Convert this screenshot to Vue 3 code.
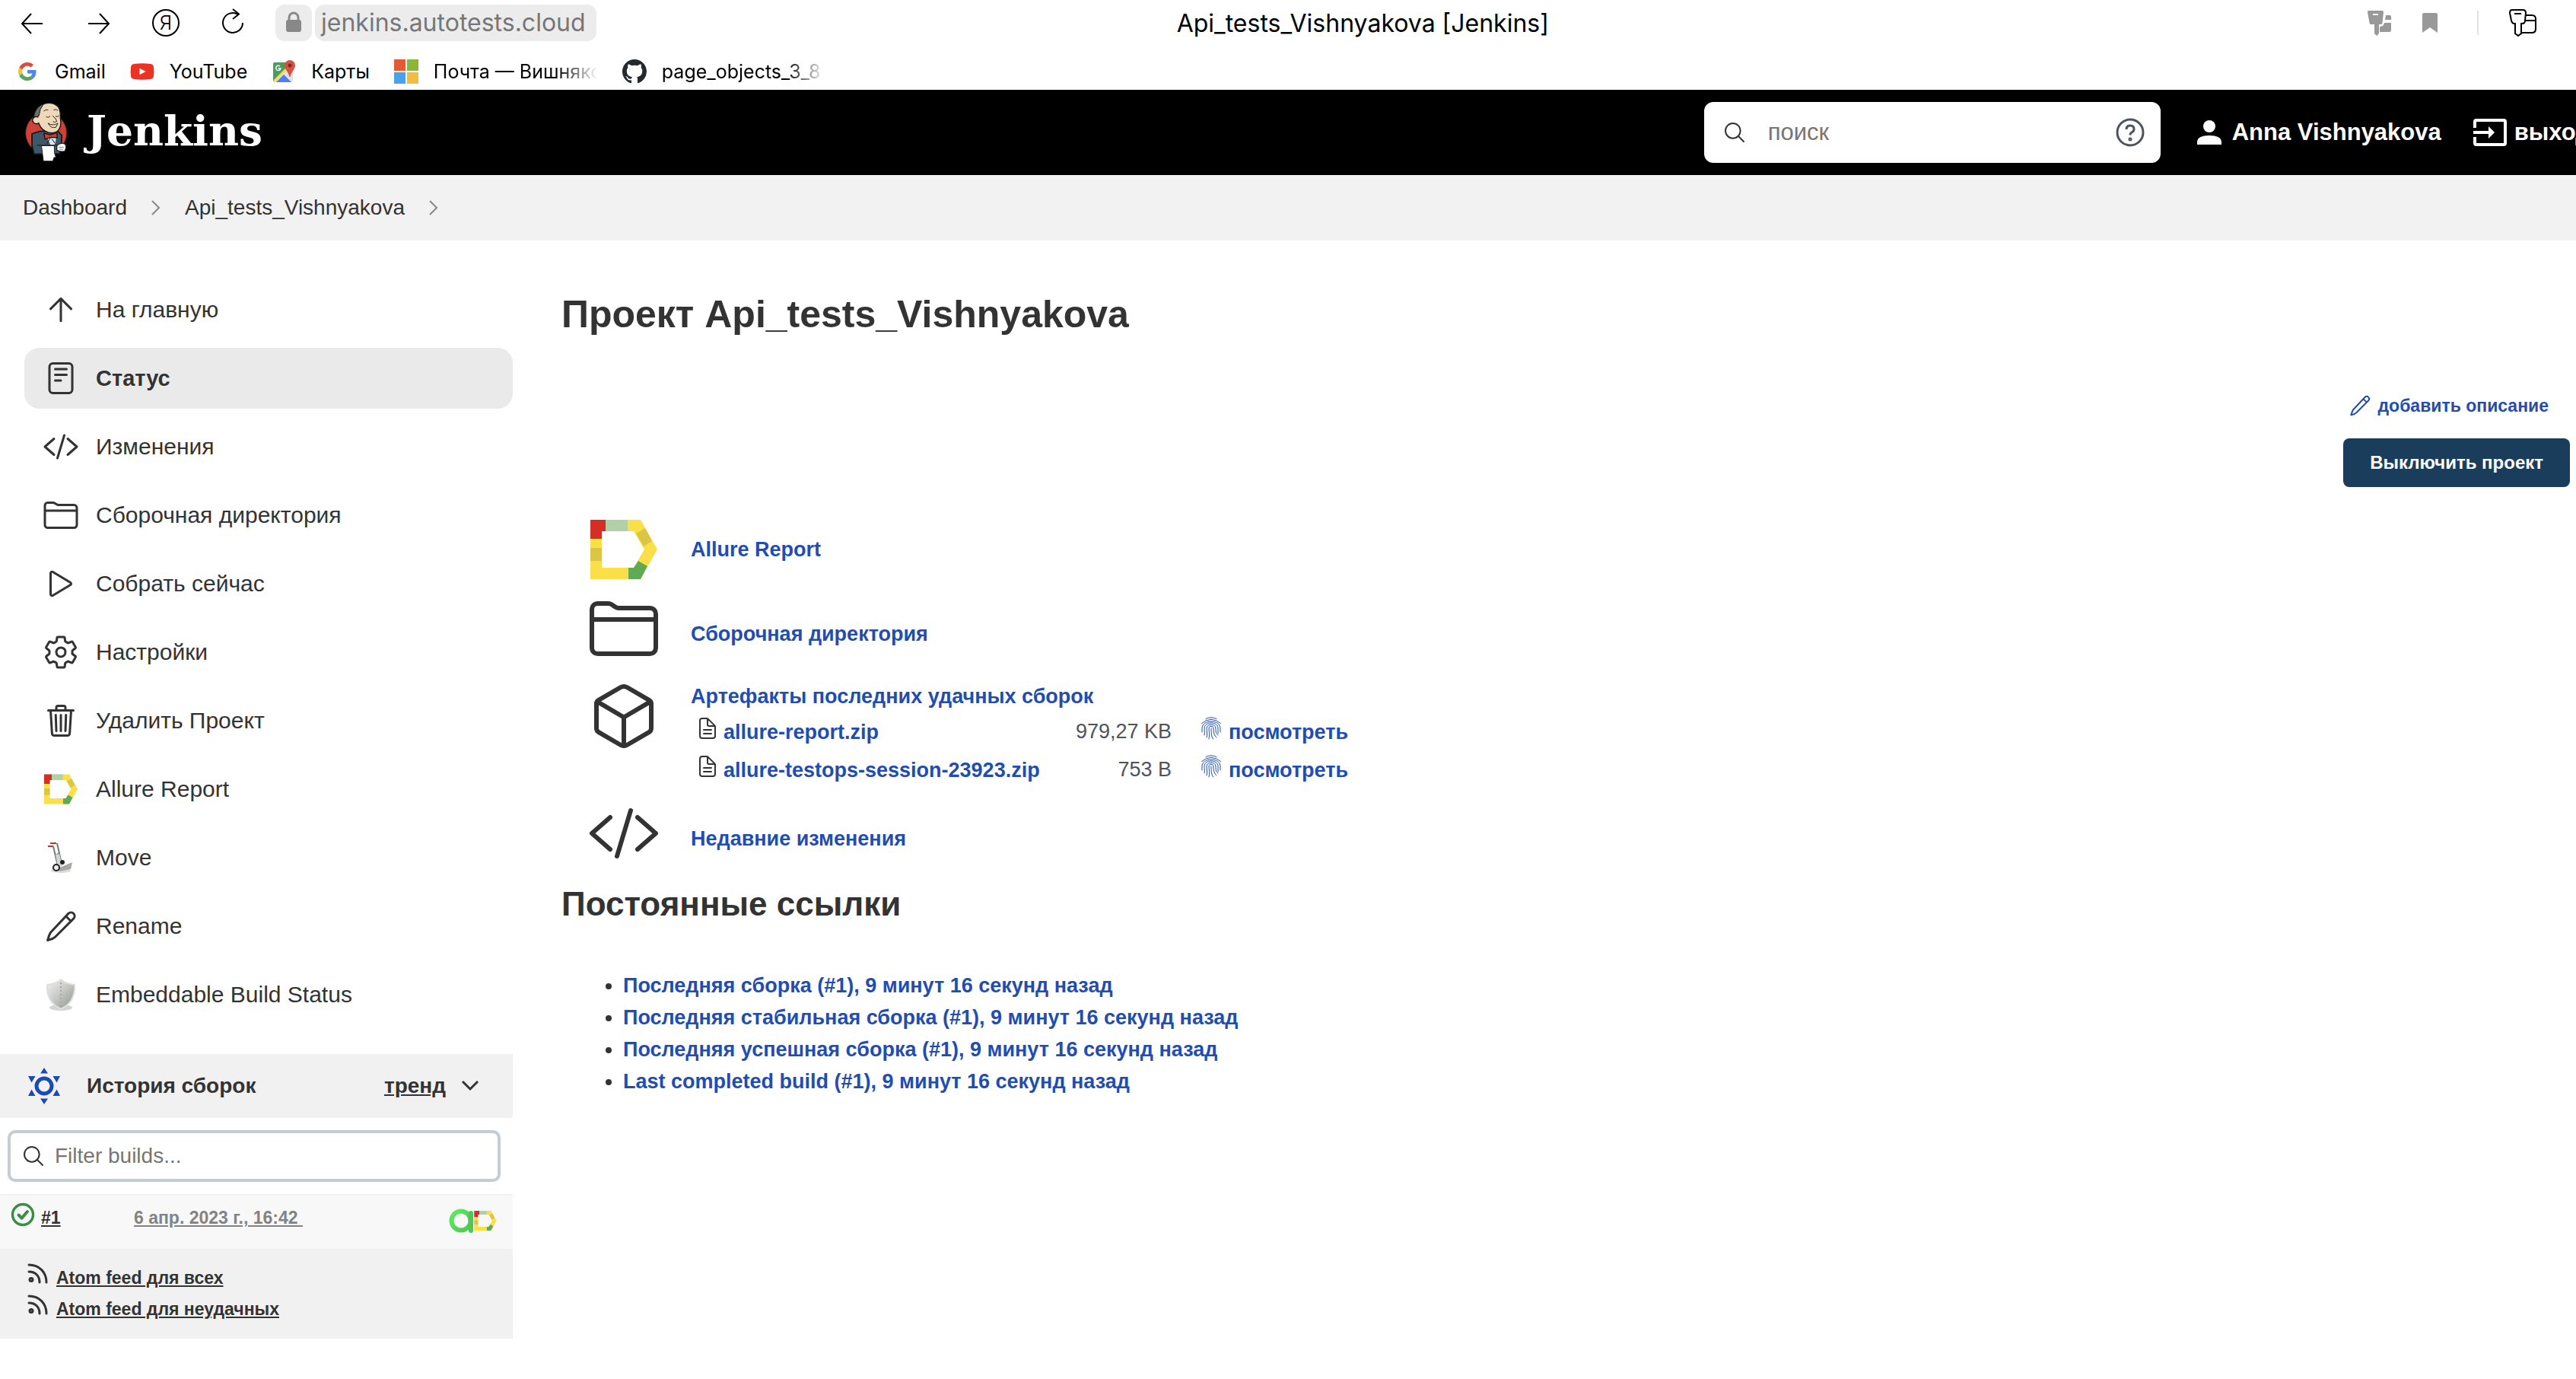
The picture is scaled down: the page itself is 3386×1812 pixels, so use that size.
<script setup>
import { ref } from 'vue'

const search = ref('')
const filter = ref('')

const tasks = [
  { icon: 'up', label: 'На главную' },
  { icon: 'reader', label: 'Статус', active: true },
  { icon: 'code', label: 'Изменения' },
  { icon: 'folder', label: 'Сборочная директория' },
  { icon: 'play', label: 'Собрать сейчас' },
  { icon: 'gear', label: 'Настройки' },
  { icon: 'trash', label: 'Удалить Проект' },
  { icon: 'allure', label: 'Allure Report' },
  { icon: 'truck', label: 'Move' },
  { icon: 'pencil', label: 'Rename' },
  { icon: 'shield', label: 'Embeddable Build Status' },
]

const bookmarks = [
  { icon: 'google', label: 'Gmail' },
  { icon: 'youtube', label: 'YouTube' },
  { icon: 'maps', label: 'Карты' },
  { icon: 'windows', label: 'Почта — Вишнякова', faded: true },
  { icon: 'github', label: 'page_objects_3_8', faded: true },
]

const artifacts = [
  { name: 'allure-report.zip', size: '979,27 KB' },
  { name: 'allure-testops-session-23923.zip', size: '753 B' },
]

const permalinks = [
  'Последняя сборка (#1), 9 минут 16 секунд назад',
  'Последняя стабильная сборка (#1), 9 минут 16 секунд назад',
  'Последняя успешная сборка (#1), 9 минут 16 секунд назад',
  'Last completed build (#1), 9 минут 16 секунд назад',
]

const feeds = ['Atom feed для всех', 'Atom feed для неудачных']
</script>

<template>
  <svg class="sprite" aria-hidden="true">
    <defs>
      <linearGradient id="steel" x1="0" y1="0" x2="1" y2="1">
        <stop offset="0" stop-color="#f4f5f3" />
        <stop offset="0.5" stop-color="#c4c6c2" />
        <stop offset="1" stop-color="#8f918d" />
      </linearGradient>
      <linearGradient id="lime" x1="0" y1="0" x2="1" y2="1">
        <stop offset="0" stop-color="#5eea62" />
        <stop offset="1" stop-color="#4fc84f" />
      </linearGradient>
    </defs>
    <symbol id="i-up" viewBox="0 0 512 512"><path class="ln" d="M112 244l144-144 144 144M256 120v292" /></symbol>
    <symbol id="i-reader" viewBox="0 0 512 512">
      <rect class="ln" x="96" y="48" width="320" height="416" rx="48" />
      <path class="ln" d="M176 128h160M176 208h160M176 288h80" />
    </symbol>
    <symbol id="i-code" viewBox="0 0 512 512"><path class="ln" d="M160 368L32 256l128-112M352 368l128-112-128-112M304 96l-96 320" /></symbol>
    <symbol id="i-folder" viewBox="0 0 512 512">
      <path class="ln" d="M440 432H72a40 40 0 01-40-40V120a40 40 0 0140-40h75.89a40 40 0 0122.19 6.72l27.84 18.56a40 40 0 0022.19 6.72H440a40 40 0 0140 40v240a40 40 0 01-40 40zM32 192h448" />
    </symbol>
    <symbol id="i-play" viewBox="0 0 512 512">
      <path class="ln" d="M112 111v290c0 17.44 17 28.52 31 20.16l247.9-148.37c12.12-7.25 12.12-26.33 0-33.58L143 90.84c-14-8.36-31 2.72-31 20.16z" />
    </symbol>
    <symbol id="i-gear" viewBox="0 0 512 512">
      <path class="ln" d="M262.29 192.31a64 64 0 1057.4 57.4 64.13 64.13 0 00-57.4-57.4zM416.39 256a154.34 154.34 0 01-1.53 20.79l45.21 35.46a10.81 10.81 0 012.45 13.75l-42.77 74a10.81 10.81 0 01-13.14 4.59l-44.9-18.08a16.11 16.11 0 00-15.17 1.75A164.48 164.48 0 01325 400.8a15.94 15.94 0 00-8.82 12.14l-6.73 47.89a11.08 11.08 0 01-10.68 9.17h-85.54a11.11 11.11 0 01-10.69-8.87l-6.72-47.82a16.07 16.07 0 00-9-12.22 155.3 155.3 0 01-21.46-12.57 16 16 0 00-15.11-1.71l-44.89 18.07a10.81 10.81 0 01-13.14-4.58l-42.77-74a10.8 10.8 0 012.45-13.75l38.21-30a16.05 16.05 0 006-14.08c-.36-4.17-.58-8.33-.58-12.5s.21-8.27.58-12.35a16 16 0 00-6.07-13.94l-38.19-30A10.81 10.81 0 0149.48 186l42.77-74a10.81 10.81 0 0113.14-4.59l44.9 18.08a16.11 16.11 0 0015.17-1.75A164.48 164.48 0 01187 111.2a15.94 15.94 0 008.82-12.14l6.73-47.89A11.08 11.08 0 01213.23 42h85.54a11.11 11.11 0 0110.69 8.87l6.72 47.82a16.07 16.07 0 009 12.22 155.3 155.3 0 0121.46 12.57 16 16 0 0015.11 1.71l44.89-18.07a10.81 10.81 0 0113.14 4.58l42.77 74a10.8 10.8 0 01-2.45 13.75l-38.21 30a16.05 16.05 0 00-6.05 14.08c.33 4.14.55 8.3.55 12.47z" />
    </symbol>
    <symbol id="i-trash" viewBox="0 0 512 512">
      <path class="ln" d="M112 112l20 320c.95 18.49 14.4 32 32 32h184c17.67 0 30.87-13.51 32-32l20-320M80 112h352M192 112V72a24 24 0 0124-24h80a24 24 0 0124 24v40M256 176v224M184 176l8 224M328 176l-8 224" />
    </symbol>
    <symbol id="i-cube" viewBox="0 0 512 512">
      <path class="ln" d="M448 341.37V170.61A32 32 0 00432.11 143l-152-88.46a47.94 47.94 0 00-48.24 0L79.89 143A32 32 0 0064 170.61v170.76A32 32 0 0079.89 369l152 88.46a48 48 0 0048.24 0l152-88.46A32 32 0 00448 341.37z" />
      <path class="ln" d="M69 153.99l187 110 187-110M256 463.99v-200" />
    </symbol>
    <symbol id="i-pencil" viewBox="0 0 512 512">
      <path class="ln" d="M364 76a51 51 0 0172 72L176 408l-38 24-68 22 22-68 20-42zM326 114l72 72" />
    </symbol>
    <symbol id="i-search" viewBox="0 0 512 512">
      <path class="ln" d="M221.09 64a157.09 157.09 0 10157.09 157.09A157.1 157.1 0 00221.09 64zM338.29 338.29L448 448" />
    </symbol>
    <symbol id="i-doc" viewBox="0 0 512 512">
      <path class="ln" d="M416 221.25V416a48 48 0 01-48 48H144a48 48 0 01-48-48V96a48 48 0 0148-48h98.75a32 32 0 0122.62 9.37l141.26 141.26a32 32 0 019.37 22.62zM256 56v120a32 32 0 0032 32h120M176 288h160M176 368h160" />
    </symbol>
    <symbol id="i-finger" viewBox="0 0 32 32">
      <path class="hair" d="M9 3.500Q16 0 23 3.500M3.500 9.500Q16-1 28.500 9.500M4 21v-5C4 4 28 4 28 16v5M7 25c1-3 0-5 0-9 0-9.500 18-9.500 18 0v7M10 28c1.500-4 0-8 0-12 0-6.500 12-6.500 12 0 0 4 0 7 3 9M13 30c1.500-5 0-10 0-14 0-3.500 6-3.500 6 0 0 5 1 10 4 12M16 16c0 6 0 10 2.500 14" />
    </symbol>
    <symbol id="i-rss" viewBox="0 0 28 28">
      <path class="rss" d="M2 3c14 0 23 10 23 23M2 12c9 0 14 6 14 14" />
      <circle class="rss" cx="5" cy="22.500" r="2" />
    </symbol>
    <symbol id="i-ok" viewBox="0 0 32 32">
      <circle cx="16" cy="16" r="13.500" fill="none" stroke="#3a8d45" stroke-width="3.400" />
      <path d="M10.500 16.500l4 4.200 7.500-8.700" fill="none" stroke="#3a8d45" stroke-width="4" stroke-linecap="round" stroke-linejoin="round" />
    </symbol>
    <symbol id="i-history" viewBox="0 0 48 48">
      <circle cx="24" cy="24" r="10" fill="none" stroke="#1b4ab8" stroke-width="5" />
      <path fill="#1b4ab8" d="M24 0l5 7.500H19zM24 48l5-7.500H19zM3 11h9.500L7.500 19.500zM45 11h-9.500l5 8.500zM3 37h9.500L7.500 28.500zM45 37h-9.500l5-8.500z" />
    </symbol>
    <symbol id="i-allure" viewBox="-4 -9 96 96">
      <path fill="#fadf48" fill-rule="evenodd" d="M0 0H66L88 39 66 78H0zM15 15V63H57L71 39 57 15z" />
      <path fill="#d52e24" d="M0 0H20V15H15V25H0z" />
      <path fill="#b0d0a8" d="M20 0H49V15H20z" />
      <path fill="#dcc544" d="M0 37H15V54H0zM60 18L72 11 81 28 70 35z" />
      <path fill="#5fab55" d="M50 63H57L63 54 75 61 66 78H50z" />
    </symbol>
    <symbol id="i-a" viewBox="0 0 32 32">
      <circle cx="16" cy="16" r="12.500" fill="none" stroke="url(#lime)" stroke-width="6" />
      <path d="M29 6v23" stroke="#4fc84f" stroke-width="6" stroke-linecap="round" />
    </symbol>
    <symbol id="i-truck" viewBox="0 0 48 48">
      <ellipse cx="24" cy="41" rx="13" ry="3" fill="#dcdcdc" />
      <path d="M14 9l6 26M19 5l6 27M17 21l5-3" fill="none" stroke="#777a78" stroke-width="2" />
      <path d="M7 9h7M10 5h8" stroke="#c8322c" stroke-width="2" />
      <path d="M17 20l5-1 4 16-6 1z" fill="#d5d7d4" />
      <path d="M20 38l19-8-2 9-15 3z" fill="#a5a8a4" />
      <circle cx="26" cy="30" r="3" fill="#222" />
      <circle cx="18" cy="37" r="4" fill="#eee" stroke="#222" stroke-width="2" />
    </symbol>
    <symbol id="i-shield" viewBox="0 0 48 48">
      <ellipse cx="24" cy="41" rx="15" ry="4" fill="#d4d4d4" />
      <path d="M24 4c4 4 10 6 18 7 1 14-4 25-18 32C10 36 5 25 6 11c8-1 14-3 18-7z" fill="url(#steel)" stroke="#dfe0de" stroke-width="2" />
      <path d="M24 8v32" stroke="#a6a8a4" stroke-width="2" stroke-dasharray="2 3" />
    </symbol>
    <symbol id="i-google" viewBox="-8 -8 64 64">
      <path fill="#d94f3d" d="M24 9.5c3.54 0 6.71 1.22 9.21 3.6l6.85-6.85C35.9 2.38 30.47 0 24 0 14.62 0 6.51 5.38 2.56 13.22l7.98 6.19C12.43 13.72 17.74 9.5 24 9.5z" />
      <path fill="#5086ec" d="M46.98 24.55c0-1.57-.15-3.09-.38-4.55H24v9.02h12.94c-.58 2.96-2.26 5.48-4.78 7.18l7.73 6c4.51-4.18 7.09-10.36 7.09-17.65z" />
      <path fill="#f2be42" d="M10.53 28.59c-.48-1.45-.76-2.99-.76-4.59s.27-3.14.76-4.59l-7.98-6.19C.92 16.46 0 20.12 0 24c0 3.88.92 7.54 2.56 10.78l7.97-6.19z" />
      <path fill="#58a55c" d="M24 48c6.480 0 11.930-2.130 15.890-5.810l-7.730-6c-2.150 1.450-4.920 2.300-8.160 2.300-6.260 0-11.570-4.220-13.470-9.910l-7.980 6.190C6.510 42.620 14.620 48 24 48z" />
    </symbol>
    <symbol id="i-youtube" viewBox="0 0 32 32">
      <path fill="#ea3323" d="M5 6q11-1.500 22 0 3.500.5 4 4 .8 6 0 12-.5 3.500-4 4-11 1.500-22 0-3.500-.5-4-4-.8-6 0-12Q1.500 6.500 5 6z" />
      <path fill="#fff" d="M12.500 11.800l8 4.200-8 4.200z" />
    </symbol>
    <symbol id="i-maps" viewBox="0 0 32 32">
      <rect x="2" y="4" width="26" height="26" rx="2" fill="#dfe1e4" />
      <path fill="#4b9a5f" d="M2 6a2 2 0 012-2h17v8L3 29H2z" />
      <path fill="#4f7ff0" d="M6 30l10-10 10 10z" />
      <path d="M3 29L20 12" stroke="#f7dc4e" stroke-width="3" />
      <path d="M11 9a3.200 3.200 0 101 3H8.500" fill="none" stroke="#fff" stroke-width="1.400" />
      <path fill="#d8503f" d="M24 1a7 7 0 017 7c0 5-5 8-6.500 15h-1C22 16 17 13 17 8a7 7 0 017-7z" />
      <circle cx="24" cy="8" r="2.500" fill="#7d2a20" />
    </symbol>
    <symbol id="i-windows" viewBox="0 0 32 32">
      <path fill="#e15b34" d="M0 0h15v15H0z" /><path fill="#8cb638" d="M17 0h15v15H17z" />
      <path fill="#4ba0ea" d="M0 17h15v15H0z" /><path fill="#f3bb42" d="M17 17h15v15H17z" />
    </symbol>
    <symbol id="i-github" viewBox="0 0 16 16">
      <path fill="#24292e" d="M8 0C3.58 0 0 3.58 0 8c0 3.54 2.29 6.53 5.47 7.59.4.07.55-.17.55-.38 0-.19-.01-.82-.01-1.49-2.01.37-2.53-.49-2.69-.94-.09-.23-.48-.94-.82-1.13-.28-.15-.68-.52-.01-.53.63-.01 1.08.58 1.23.82.72 1.21 1.87.87 2.33.66.07-.52.28-.87.51-1.07-1.78-.2-3.64-.89-3.64-3.95 0-.87.31-1.59.82-2.15-.08-.2-.36-1.02.08-2.12 0 0 .67-.21 2.2.82.64-.18 1.32-.27 2-.27s1.36.09 2 .27c1.53-1.04 2.2-.82 2.2-.82.44 1.1.16 1.92.08 2.12.51.56.82 1.27.82 2.15 0 3.07-1.87 3.75-3.65 3.95.29.25.54.73.54 1.48 0 1.07-.01 1.93-.01 2.2 0 .21.15.46.55.38A8.01 8.01 0 0016 8c0-4.42-3.58-8-8-8z" />
    </symbol>
  </svg>

  <div class="page">
    <div class="browser">
      <div class="toolbar">
        <button class="tool" aria-label="Назад">
          <svg viewBox="0 0 40 40"><path class="thin" d="M34 21H7M19 8L7 21l12 13" /></svg>
        </button>
        <button class="tool" aria-label="Вперёд">
          <svg viewBox="0 0 40 40"><path class="thin" d="M6 21h27M21 8l12 13-12 13" /></svg>
        </button>
        <button class="tool"><span class="ya">Я</span></button>
        <button class="tool" aria-label="Обновить">
          <svg viewBox="0 0 40 40"><path class="thin" d="M33 20A13 13 0 1 1 27 9M20 2l8 6.500-8 6.500" /></svg>
        </button>
        <span class="lock">
          <svg viewBox="0 0 48 48" width="48" height="48">
            <rect x="14" y="20" width="20" height="16" rx="3" fill="#888" />
            <path d="M18 21v-4a6 6 0 0112 0v4" fill="none" stroke="#888" stroke-width="3" />
          </svg>
        </span>
        <span class="url">jenkins.autotests.cloud</span>
        <span class="tab-title">Api_tests_Vishnyakova [Jenkins]</span>
        <span class="tool-right">
          <svg viewBox="0 0 36 36" width="36" height="36">
            <path fill="#999" fill-rule="evenodd" d="M3 2h18q2 0 2 2l-1.500 14q0 2-2 2H17v12l-3 3-3-3V20H6.500q-2 0-2-2L2 4q0-2 1-2zM9 6v2h7V6z" />
            <path fill="#999" d="M26 8h5q2 0 2 2v4h-8zM24 18h9v10q0 2-2 2H18v-7q5 0 6-5z" />
          </svg>
          <svg viewBox="0 0 20 26" width="20" height="26"><path fill="#999" d="M2 0h16q2 0 2 2v24l-10-7-10 7V2q0-2 2-2z" /></svg>
          <i class="sep"></i>
          <svg viewBox="0 0 36 36" width="36" height="36" class="key">
            <path class="thin" d="M4 1h14q4 0 4 4l-1 10q0 4-4 4h-1v13l-4 3-4-3V19H7q-3 0-4-4L1 5q0-4 3-4zM7 6h9M22 8h8q5 0 5 5v13q0 5-5 5H16M21 15h14" />
          </svg>
        </span>
      </div>
      <nav class="bookmarks">
        <a v-for="b in bookmarks" :key="b.label" href="#" class="bookmark">
          <svg class="i32"><use :href="'#i-' + b.icon" /></svg>
          <span :class="{ faded: b.faded }">{{ b.label }}</span>
        </a>
      </nav>
    </div>

    <header class="top">
      <a href="#" class="brand">
        <svg class="butler" viewBox="96 400 176 245">
          <circle cx="183" cy="525" r="83" fill="#cf4037" stroke="#222" stroke-width="3" />
          <path d="M126 528l32-10 72 0 16 16-2 34-6 40-104 2-8-34z" fill="#3b5769" stroke="#111" stroke-width="5" stroke-linejoin="round" />
          <path d="M188 545l38-10-8 36-14 10z" fill="#d9e6ee" />
          <path d="M146 440q8-26 34-34 30-6 50 12 12 14 10 46l2 18q0 24-14 36-16 10-38 4-22-8-32-26-10-20-14-32z" fill="#efd8ba" stroke="#111" stroke-width="4" />
          <path d="M166 410q-26 14-32 44l2 14 14-12q4 4 6-8 0-18 14-36z" fill="#6d6b6d" stroke="#111" stroke-width="3" />
          <path d="M152 462q-16-8-24 8 0 18 18 18l8-4" fill="#efd8ba" stroke="#111" stroke-width="4" />
          <path d="M174 436q8-8 16-4M214 432q10-6 16 2M184 460q8 6 14-2M222 458q8 4 12-2M210 456q14 12 16 22-6 6-14 2M192 486q16 12 38 0l-8 16q-18 4-26-8z" fill="none" stroke="#222" stroke-width="3" stroke-linecap="round" />
          <path d="M174 526l26 6 26-8 2 20-24-2-26 8z" fill="#d8392f" stroke="#111" stroke-width="4" stroke-linejoin="round" />
          <path d="M200 545l-14 22M206 548l12 18" stroke="#111" stroke-width="3" />
          <path d="M164 576h52v28l6 18-8 2-4 14h-38z" fill="#fff" stroke="#222" stroke-width="3" />
          <path d="M146 574h84M226 574q20-12 34-4 6 14-2 28-18 4-32-4z" fill="#fff" stroke="#222" stroke-width="4" />
          <path d="M234 582h20M236 590h16" stroke="#333" stroke-width="2" />
        </svg>
        <span class="brand-name">Jenkins</span>
      </a>
      <div class="account">
        <label class="search">
          <svg class="i32"><use href="#i-search" /></svg>
          <input v-model="search" type="text" placeholder="поиск" aria-label="поиск" />
          <svg viewBox="0 0 40 40" width="40" height="40" class="help">
            <circle cx="20" cy="20" r="17" />
            <path d="M15 16q0-5 5-5t5 4.500q0 3-3 4.500-2 1-2 3.500" />
            <circle cx="20" cy="29" r="1" />
          </svg>
        </label>
        <a href="#" class="user">
          <svg viewBox="0 0 32 32" width="32" height="32"><circle cx="16" cy="8" r="8" fill="#fff" /><path fill="#fff" d="M0 32v-4q1-8 16-8t16 8v4z" /></svg>
          Anna Vishnyakova
        </a>
        <a href="#" class="logout">
          <svg viewBox="0 0 44 36" width="44" height="36">
            <path d="M2 12V4q0-2 2-2h36q2 0 2 2v28q0 2-2 2H4q-2 0-2-2v-8" fill="none" stroke="#fff" stroke-width="4" />
            <path d="M0 16h20v-6l8 8-8 8v-6H0z" fill="#fff" />
          </svg>
          выход
        </a>
      </div>
    </header>

    <nav class="crumbs">
      <a href="#">Dashboard</a>
      <svg viewBox="0 0 12 20" width="12" height="20"><path d="M1 1l9 9-9 9" /></svg>
      <a href="#">Api_tests_Vishnyakova</a>
      <svg viewBox="0 0 12 20" width="12" height="20"><path d="M1 1l9 9-9 9" /></svg>
    </nav>

    <div class="body">
      <aside>
        <nav class="tasks">
          <a v-for="t in tasks" :key="t.label" href="#" class="task" :class="{ active: t.active }">
            <svg class="i48"><use :href="'#i-' + t.icon" /></svg>
            <span>{{ t.label }}</span>
          </a>
        </nav>

        <section class="history">
          <div class="history-head">
            <svg class="i48"><use href="#i-history" /></svg>
            <b>История сборок</b>
            <a href="#">тренд</a>
            <svg viewBox="0 0 24 16" width="24" height="16" class="chev"><path d="M2 2l10 10L22 2" /></svg>
          </div>
          <label class="filter">
            <svg class="i32"><use href="#i-search" /></svg>
            <input v-model="filter" type="text" placeholder="Filter builds..." aria-label="Filter builds" />
          </label>
          <div class="build">
            <svg class="i32"><use href="#i-ok" /></svg>
            <a href="#" class="num">#1</a>
            <a href="#" class="date">6 апр. 2023 г., 16:42&nbsp;</a>
            <span class="badges">
              <svg class="i32"><use href="#i-a" /></svg>
              <svg class="i32"><use href="#i-allure" /></svg>
            </span>
          </div>
          <div class="feeds">
            <a v-for="f in feeds" :key="f" href="#">
              <svg width="28" height="28"><use href="#i-rss" /></svg>
              <span>{{ f }}</span>
            </a>
          </div>
        </section>
      </aside>

      <main>
        <h1>Проект Api_tests_Vishnyakova</h1>
        <div class="actions">
          <a href="#" class="describe">
            <svg class="i32"><use href="#i-pencil" /></svg>
            добавить описание
          </a>
          <button class="disable">Выключить проект</button>
        </div>

        <div class="summary">
          <div class="row">
            <svg class="i96"><use href="#i-allure" /></svg>
            <a href="#">Allure Report</a>
          </div>
          <div class="row low">
            <svg class="i96"><use href="#i-folder" /></svg>
            <a href="#">Сборочная директория</a>
          </div>
          <div class="row files">
            <svg class="i96"><use href="#i-cube" /></svg>
            <div>
              <a href="#" class="files-title">Артефакты последних удачных сборок</a>
              <table>
                <tbody>
                  <tr v-for="a in artifacts" :key="a.name">
                    <td class="c-name">
                      <svg class="i32"><use href="#i-doc" /></svg>
                      <a href="#">{{ a.name }}</a>
                    </td>
                    <td class="c-size">{{ a.size }}</td>
                    <td class="c-view">
                      <a href="#"><svg class="i32"><use href="#i-finger" /></svg>посмотреть</a>
                    </td>
                  </tr>
                </tbody>
              </table>
            </div>
          </div>
          <div class="row low">
            <svg class="i96"><use href="#i-code" /></svg>
            <a href="#">Недавние изменения</a>
          </div>
        </div>

        <h2>Постоянные ссылки</h2>
        <ul>
          <li v-for="p in permalinks" :key="p"><a href="#">{{ p }}</a></li>
        </ul>
      </main>
    </div>
  </div>
</template>

<style>
body {
  background: #fff;
}
</style>

<style scoped>
.page {
  font-family: "Liberation Sans", Arial, sans-serif;
  font-size: 27px;
  color: #333;
  overflow: hidden;
}
.sprite {
  position: absolute;
  width: 0;
  height: 0;
}
svg {
  display: block;
  flex: none;
}
a {
  color: inherit;
  text-decoration: none;
}
button {
  border: 0;
  padding: 0;
  background: none;
  font: inherit;
}
.i32 { width: 32px; height: 32px; }
.i48 { width: 48px; height: 48px; }
.i96 { width: 96px; height: 96px; }
.ln {
  fill: none;
  stroke: currentColor;
  stroke-width: 32px;
  stroke-linecap: round;
  stroke-linejoin: round;
}
.hair {
  fill: none;
  stroke: currentColor;
  stroke-width: 1px;
  stroke-linecap: round;
}
.rss {
  fill: none;
  stroke: #333;
  stroke-width: 3px;
  stroke-linecap: round;
}
.thin {
  fill: none;
  stroke: #000;
  stroke-width: 2px;
}

.browser {
  font-family: Inter, sans-serif;
  color: #000;
}
.toolbar {
  display: flex;
  align-items: center;
  height: 60px;
  padding: 0 52px 0 22px;
}
.tool {
  width: 40px;
  height: 40px;
  margin-right: 48px;
}
.tool:nth-child(4) {
  margin-right: 36px;
}
.ya {
  display: block;
  box-sizing: border-box;
  width: 36px;
  height: 36px;
  margin: 0 auto;
  border: 2px solid #000;
  border-radius: 50%;
  font-size: 26px;
  font-weight: 300;
  line-height: 32px;
  text-align: center;
}
.lock,
.url {
  height: 48px;
  border-radius: 12px;
  background: #ececec;
}
.lock {
  width: 48px;
  margin-right: 4px;
}
.url {
  padding: 0 14px 0 8px;
  color: #777;
  font-size: 32px;
  line-height: 48px;
}
.tab-title {
  flex: 1;
  font-size: 32px;
  text-align: center;
}
.tool-right {
  display: flex;
  align-items: center;
  justify-content: flex-end;
  width: 535px;
}
.tool-right svg + svg {
  margin-left: 38px;
}
.sep {
  width: 2px;
  height: 32px;
  margin: 0 40px 0 52px;
  background: #e2e2e2;
}
.bookmarks {
  display: flex;
  gap: 32px;
  height: 58px;
  padding: 0 20px;
  box-sizing: border-box;
}
.bookmark {
  display: flex;
  align-items: center;
  gap: 20px;
  height: 68px;
  font-size: 25px;
  white-space: nowrap;
}
.faded {
  width: 216px;
  overflow: hidden;
  mask-image: linear-gradient(to right, #000 75%, transparent 100%);
}

.top {
  display: flex;
  align-items: center;
  height: 112px;
  padding-left: 32px;
  background: #000;
  color: #fff;
  overflow: hidden;
}
.brand {
  display: flex;
  align-items: center;
  gap: 24px;
}
.butler {
  width: 58px;
  height: 80px;
}
.brand-name {
  padding-bottom: 4px;
  font-family: "DejaVu Serif", serif;
  font-size: 55px;
  font-weight: bold;
  line-height: 64px;
}
.account {
  display: flex;
  flex: none;
  align-items: center;
  margin: 0 -19px 0 auto;
  font-size: 31px;
  font-weight: bold;
  white-space: nowrap;
}
.search {
  display: flex;
  align-items: center;
  box-sizing: border-box;
  width: 600px;
  height: 80px;
  margin-right: 48px;
  padding: 0 20px 0 24px;
  border-radius: 12px;
  background: #fff;
  color: #333;
}
input {
  flex: 1;
  min-width: 0;
  padding: 0;
  border: 0;
  outline: 0;
  background: none;
  font: inherit;
}
input::placeholder {
  color: #767676;
  opacity: 1;
}
.search input {
  margin-left: 28px;
  font-size: 31px;
  font-weight: normal;
}
.help {
  fill: none;
  stroke: #4d545d;
  stroke-width: 3px;
}
.user,
.logout {
  display: flex;
  align-items: center;
}
.user {
  gap: 14px;
  margin-right: 42px;
}
.logout {
  gap: 10px;
}

.crumbs {
  display: flex;
  align-items: center;
  gap: 32px;
  height: 86px;
  padding-left: 30px;
  background: #f2f2f2;
  font-size: 28px;
}
.crumbs path {
  fill: none;
  stroke: #888;
  stroke-width: 2px;
}

.body {
  display: flex;
  align-items: flex-start;
}
aside {
  flex: none;
  width: 674px;
  padding-top: 51px;
}
.tasks {
  display: flex;
  flex-direction: column;
  gap: 10px;
  padding-left: 32px;
}
.task {
  display: flex;
  align-items: center;
  gap: 22px;
  height: 80px;
  padding-left: 24px;
  border-radius: 20px;
  font-size: 30px;
}
.task.active {
  background: #eaeaea;
  font-size: 29px;
  font-weight: bold;
}
.history {
  margin-top: 38px;
}
.history-head {
  display: flex;
  align-items: center;
  height: 84px;
  padding: 0 44px 0 34px;
  background: #f1f1f1;
  font-size: 28px;
  font-weight: bold;
}
.history-head b {
  flex: 1;
  margin-left: 32px;
}
.history-head a {
  margin-right: 20px;
  text-decoration: underline;
}
.chev {
  fill: none;
  stroke: #333;
  stroke-width: 3px;
}
.filter {
  display: flex;
  align-items: center;
  gap: 12px;
  box-sizing: border-box;
  height: 68px;
  margin: 16px 16px 16px 10px;
  padding: 0 14px;
  border: 4px solid #c4cdd2;
  border-radius: 10px;
  font-size: 28px;
}
.build {
  display: flex;
  align-items: flex-start;
  box-sizing: border-box;
  height: 72px;
  padding: 9px 20px 0 14px;
  border-top: 2px solid #f0f0f0;
  background: #f8f8f8;
  font-size: 23px;
  font-weight: bold;
  line-height: 40px;
}
.build a {
  text-decoration: underline;
}
.num {
  width: 122px;
  padding-left: 8px;
}
.date {
  flex: 1;
  color: #838383;
}
.badges {
  display: flex;
  margin-top: 8px;
}
.feeds {
  box-sizing: border-box;
  padding: 18px 36px 18px;
  background: #f1f1f1;
  font-size: 23px;
  font-weight: bold;
}
.feeds a {
  display: flex;
  gap: 10px;
  line-height: 41px;
  text-decoration: underline;
}

main {
  flex: 1;
  min-width: 0;
  padding: 67px 0 40px 64px;
}
main a {
  color: #1f4db2;
  font-weight: bold;
}
h1,
h2 {
  margin: 0;
  font-size: 50px;
  line-height: 60px;
}
h2 {
  margin-top: 20px;
  font-size: 44px;
  line-height: 50px;
}
.actions {
  display: flex;
  flex-direction: column;
  align-items: flex-end;
  gap: 23px;
  padding: 70px 8px 34px 0;
}
.describe {
  display: flex;
  align-items: center;
  gap: 8px;
  padding-right: 28px;
  font-size: 23px;
  line-height: 40px;
}
.disable {
  height: 64px;
  padding: 0 35px;
  border-radius: 8px;
  background: #1b3d5c;
  color: #fff;
  font-size: 24px;
  font-weight: bold;
}
.summary {
  display: flex;
  flex-direction: column;
  gap: 8px;
  padding-left: 34px;
}
.row {
  display: flex;
  align-items: center;
  gap: 40px;
  line-height: 40px;
}
.low a {
  padding-top: 14px;
}
.files {
  align-items: flex-start;
  padding: 11px 0 2px;
}
.files-title {
  display: block;
  line-height: 44px;
}
table {
  border-collapse: collapse;
}
td {
  height: 48px;
  padding: 0 0 2px;
}
.c-name {
  width: 480px;
}
.c-name,
.c-view a {
  white-space: nowrap;
}
td svg {
  display: inline-block;
  vertical-align: -2px;
}
.c-name svg {
  margin: 0 5px 0 6px;
}
.c-size {
  width: 152px;
  color: #4d545d;
  text-align: right;
}
.c-view {
  padding-left: 36px;
}
.c-view svg {
  margin-right: 7px;
}
ul {
  margin: 61px 0 0;
  padding-left: 81px;
  line-height: 42px;
}
</style>
